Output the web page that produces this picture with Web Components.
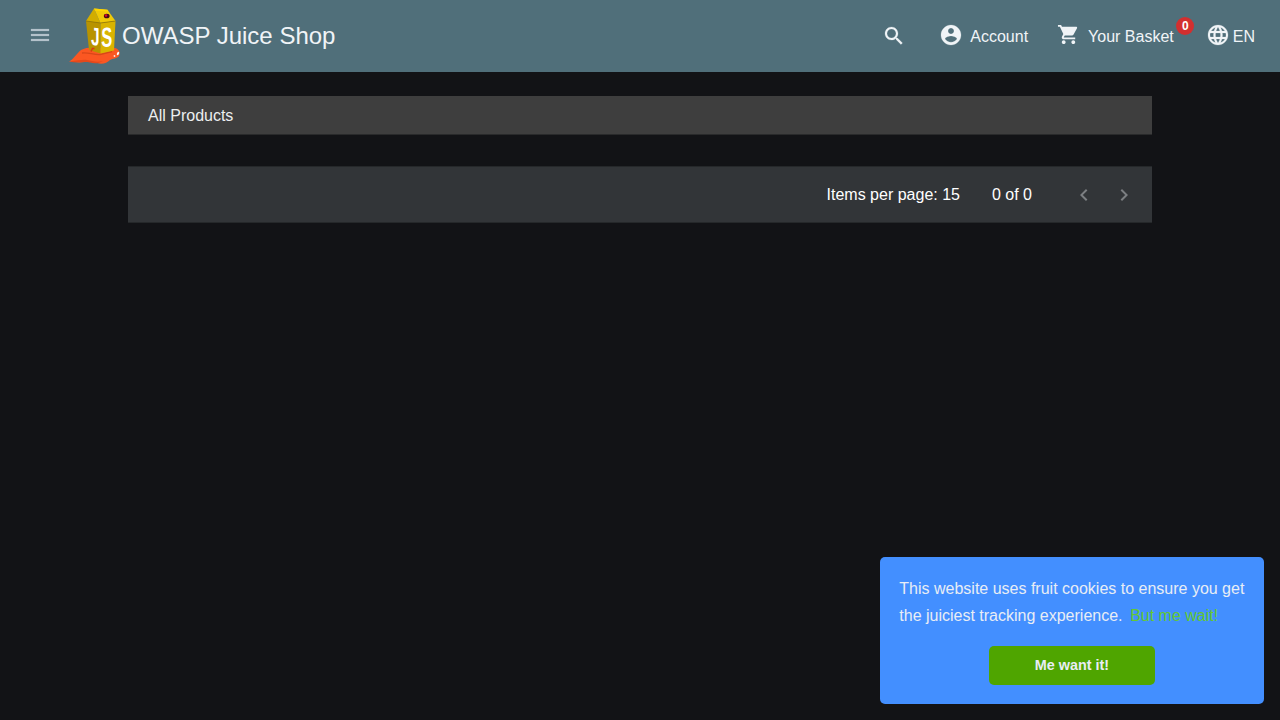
<!DOCTYPE html>
<html lang="en">
<head>
<meta charset="utf-8">
<title>OWASP Juice Shop</title>
<style>
  html, body { margin: 0; height: 100%; background: #121316; }
  body { font-family: "Liberation Sans", Arial, sans-serif; font-size: 16px; color: #f0f4f7; overflow: hidden; }
</style>
</head>
<body>
<shop-app></shop-app>
<script>
  const define = (name, markup) => {
    const template = document.createElement('template');
    template.innerHTML = markup;
    customElements.define(name, class extends HTMLElement {
      constructor() {
        super();
        this.attachShadow({ mode: 'open' }).append(template.content.cloneNode(true));
      }
    });
  };

  const icons = {
    menu: 'M3 18h18v-2H3v2zm0-5h18v-2H3v2zm0-7v2h18V6H3z',
    search: 'M15.5 14h-.79l-.28-.27C15.41 12.59 16 11.11 16 9.5 16 5.91 13.09 3 9.5 3S3 5.91 3 9.5 5.91 16 9.5 16c1.61 0 3.09-.59 4.23-1.57l.27.28v.79l5 4.99L20.49 19l-4.99-5zm-6 0C7.01 14 5 11.99 5 9.5S7.01 5 9.5 5 14 7.01 14 9.5 11.99 14 9.5 14z',
    account: 'M12 2C6.48 2 2 6.48 2 12s4.48 10 10 10 10-4.48 10-10S17.52 2 12 2zm0 3c1.66 0 3 1.34 3 3s-1.34 3-3 3-3-1.34-3-3 1.34-3 3-3zm0 14.2c-2.5 0-4.71-1.28-6-3.22.03-1.99 4-3.08 6-3.08 1.99 0 5.97 1.09 6 3.08-1.29 1.94-3.5 3.22-6 3.22z',
    cart: 'M7 18c-1.1 0-1.99.9-1.99 2S5.9 22 7 22s2-.9 2-2-.9-2-2-2zM1 2v2h2l3.6 7.59-1.35 2.45c-.16.28-.25.61-.25.96 0 1.1.9 2 2 2h12v-2H7.42c-.14 0-.25-.11-.25-.25l.03-.12.9-1.63h7.45c.75 0 1.41-.41 1.75-1.03l3.58-6.49c.08-.14.12-.31.12-.48 0-.55-.45-1-1-1H5.21l-.94-2H1zm16 16c-1.1 0-1.99.9-1.99 2s.89 2 1.99 2 2-.9 2-2-.9-2-2-2z',
    language: 'M11.99 2C6.47 2 2 6.48 2 12s4.47 10 9.99 10C17.52 22 22 17.52 22 12S17.52 2 11.99 2zm6.93 6h-2.95c-.32-1.25-.78-2.45-1.38-3.56 1.84.63 3.37 1.91 4.33 3.56zM12 4.04c.83 1.2 1.48 2.53 1.91 3.96h-3.82c.43-1.43 1.08-2.76 1.91-3.96zM4.26 14C4.1 13.36 4 12.69 4 12s.1-1.36.26-2h3.38c-.08.66-.14 1.32-.14 2s.06 1.34.14 2H4.26zm.82 2h2.95c.32 1.25.78 2.45 1.38 3.56-1.84-.63-3.37-1.9-4.33-3.56zm2.95-8H5.08c.96-1.66 2.49-2.93 4.33-3.56C8.81 5.55 8.35 6.75 8.03 8zM12 19.96c-.83-1.2-1.48-2.53-1.91-3.96h3.82c-.43 1.43-1.08 2.76-1.91 3.96zM14.34 14H9.66c-.09-.66-.16-1.32-.16-2s.07-1.35.16-2h4.68c.09.65.16 1.32.16 2s-.07 1.34-.16 2zm.25 5.56c.6-1.11 1.06-2.31 1.38-3.56h2.95c-.96 1.65-2.49 2.93-4.33 3.56zM16.36 14c.08-.66.14-1.32.14-2s-.06-1.34-.14-2h3.38c.16.64.26 1.31.26 2s-.1 1.36-.26 2h-3.38z',
    prev: 'M15.41 7.41L14 6l-6 6 6 6 1.41-1.41L10.83 12z',
    next: 'M10 6L8.59 7.41 13.17 12l-4.58 4.59L10 18l6-6z'
  };

  customElements.define('mat-glyph', class extends HTMLElement {
    constructor() {
      super();
      this.attachShadow({ mode: 'open' });
    }
    connectedCallback() {
      this.shadowRoot.innerHTML = `<style>
        :host { display: block; flex: none; width: var(--size, 24px); height: var(--size, 24px); }
        svg { display: block; width: 100%; height: 100%; fill: currentColor; stroke: currentColor; stroke-width: var(--weight, 0); }
      </style><svg viewBox="0 0 24 24"><path d="${icons[this.getAttribute('name')]}"/></svg>`;
    }
  });

  define('juice-logo', `<style>
    :host { display: block; flex: none; width: 54px; height: 60px; }
    svg { display: block; }
    text { font: bold 22px "Liberation Sans", Arial, sans-serif; fill: #fff; }
  </style>
  <svg width="54" height="60" viewBox="68 6 54 60">
    <path d="M69 61.500C74 59 76 54 81 50c5-3 12-3 20-2l14 0c4 1 6 5 4 8-2 3-6 2-9 4-3 3-8 5-13 3-5-1-8-2-13-1-5 1-10 0-15-.5z" fill="#fb5722"/>
    <path d="M70 61.500c8-1 12-2 17-1.500 5 .5 9 3 16 1-5 3-9 2.500-13 1.500-7-1.500-12 1-20-1z" fill="#e5481a"/>
    <path d="M82 53c6-1 12 2 18 1.500l12-3" stroke="#d94719" stroke-width="1.300" fill="none"/>
    <path d="M86 21l14.500 2v30.500L89 50z" fill="#b89300"/>
    <path d="M100.500 23l15-2-1.500 29.500-13.500 3z" fill="#d9b400"/>
    <path d="M94 8.500L86 21l14.500 2z" fill="#d2ad00"/>
    <path d="M94 8.500l13.500 1.200 8 11.300-15 2z" fill="#f0ca08"/>
    <path d="M94 8.500l13.500 1.200 1 1.800-13.500-.8z" fill="#ffd600"/>
    <path d="M86 21l14.500 2 15-2" stroke="#947500" stroke-width=".8" fill="none"/>
    <ellipse cx="106.700" cy="16" rx="2.900" ry="2.300" fill="#430b16"/>
    <circle cx="106" cy="15.500" r="1.300" fill="#dc0d2c"/>
    <g transform="translate(91 44.800) skewY(8) scale(.7 1.160)"><text>J</text></g>
    <g transform="translate(101.200 46.900) skewY(-4) scale(.75 1.250)"><text>S</text></g>
    <path d="M91 51.500l1.500-3h2" stroke="#d73c11" stroke-width="1.500" fill="none"/>
    <ellipse cx="118" cy="53.500" rx="1" ry="1.800" transform="rotate(28 118 53.500)" fill="#fff"/>
    <circle cx="114.500" cy="56" r=".9" fill="#ffe6df"/>
  </svg>`);

  define('nav-action', `<style>
    :host { display: flex; align-items: center; height: 24px; }
    .label { margin-left: var(--gap, 8px); line-height: 24px; padding-top: 3px; white-space: nowrap; }
  </style><slot name="icon"></slot><span class="label"><slot></slot></span>`);

  define('count-badge', `<style>
    :host { position: absolute; left: 100%; top: -8px; margin-left: 2.500px; width: 18px; height: 18px; border-radius: 50%;
      background: #d32f2f; color: #fff; font-size: 12px; font-weight: bold; line-height: 18px; text-align: center; }
  </style><slot></slot>`);

  define('shop-toolbar', `<style>
    :host { display: flex; align-items: center; box-sizing: border-box; height: 72px; padding: 0 25px 0 28px; background: #506f7a; }
    h1 { margin: 0; font-size: 24px; font-weight: 400; line-height: 32px; white-space: nowrap; }
    nav { display: flex; align-items: center; margin: -2px 0 0 auto; }
    mat-glyph { --weight: .2px; }
    .menu { color: #b5c2cb; margin: -3px 16px 0 0; }
    .search { margin: 2px 0 0; }
    .account { margin-left: 32px; }
    .basket { margin-left: 28px; }
    .anchor { position: relative; display: inline-block; }
    .language { margin-left: 32px; --gap: 3px; }
    .account mat-glyph { margin: -1px -.5px 0 .5px; }
    .basket mat-glyph { --size: 23px; --weight: 0; margin: -1px 0 0 1px; }
  </style>
  <mat-glyph class="menu" name="menu"></mat-glyph>
  <juice-logo></juice-logo>
  <h1>OWASP Juice Shop</h1>
  <nav>
    <mat-glyph class="search" name="search"></mat-glyph>
    <nav-action class="account"><mat-glyph slot="icon" name="account"></mat-glyph>Account</nav-action>
    <nav-action class="basket"><mat-glyph slot="icon" name="cart"></mat-glyph><span class="anchor">Your Basket<count-badge>0</count-badge></span></nav-action>
    <nav-action class="language"><mat-glyph slot="icon" name="language"></mat-glyph>EN</nav-action>
  </nav>`);

  define('page-heading', `<style>
    :host { display: block; box-sizing: border-box; height: 39px; padding: 0 20px; line-height: 39px;
      background: #3e3e3e; border-bottom: 1px solid #292a2b; color: #eceef0; }
  </style><slot></slot>`);

  define('page-navigator', `<style>
    :host { display: flex; align-items: center; justify-content: flex-end; box-sizing: border-box; height: 57px;
      padding-right: 16px; background: #323538; border: solid #25282a; border-width: 1px 0; color: #fff; }
    .range { margin: 0 40px 0 32px; }
    .arrows { display: flex; gap: 16px; color: #7c7f82; }
  </style>
  <span>Items per page: 15</span><span class="range">0 of 0</span>
  <div class="arrows"><mat-glyph name="prev"></mat-glyph><mat-glyph name="next"></mat-glyph></div>`);

  define('cookie-notice', `<style>
    :host { position: fixed; right: 16px; bottom: 16px; display: flex; flex-direction: column; align-items: center;
      box-sizing: border-box; width: 384px; height: 147px; padding: 18px 19px 19px; border-radius: 5px; background: #438fff; color: #e8edf5; }
    p { margin: 0; align-self: stretch; padding-left: .3px; line-height: 27px; white-space: nowrap; }
    a { margin-left: 3.200px; color: #64c832; }
    button { margin: auto 0 0; width: 166px; height: 39px; padding: 0 0 2px; border: 0; border-radius: 5px; background: #4fa500;
      color: #e8edf5; font: bold 14.4px "Liberation Sans", Arial, sans-serif; }
  </style>
  <p>This website uses fruit cookies to ensure you get<br>the juiciest tracking experience. <a>But me wait!</a></p>
  <button>Me want it!</button>`);

  define('shop-app', `<style>
    :host { display: block; height: 100vh; }
    main { display: flex; flex-direction: column; gap: 31px; width: 1024px; margin: 24px auto 0; }
  </style>
  <shop-toolbar></shop-toolbar>
  <main>
    <page-heading>All Products</page-heading>
    <page-navigator></page-navigator>
  </main>
  <cookie-notice></cookie-notice>`);
</script>
</body>
</html>
